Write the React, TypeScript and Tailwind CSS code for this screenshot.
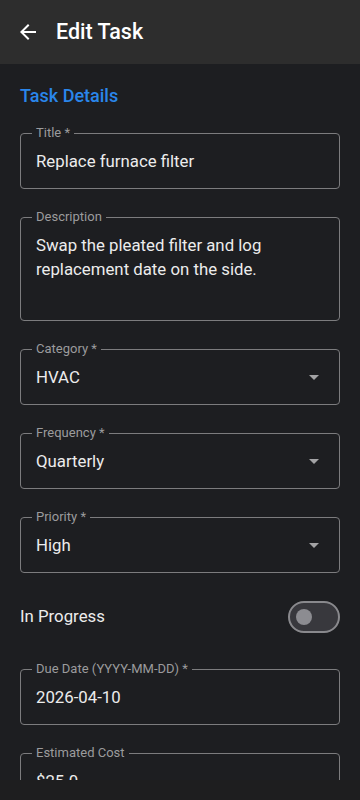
import React from "react";

const font = { fontFamily: "Roboto, 'Noto Sans', sans-serif" };

function Field({
  label,
  value,
  select,
  multiline,
}: {
  label: string;
  value: string;
  select?: boolean;
  multiline?: boolean;
}) {
  return (
    <div
      className={`relative rounded-[4px] border border-[#7c7c7e] ${
        multiline ? "h-[104px] pt-[15px]" : "h-14 flex items-center"
      } pl-[15px] pr-4`}
    >
      <span className="absolute -top-[9px] left-[11px] bg-[#1d1e21] px-1 text-[13px] leading-4 text-[#9b9b9d]">
        {label}
      </span>
      <div className="flex-1 text-[16.8px] leading-6 text-[#ececec]">{value}</div>
      {select && (
        <svg width="10" height="5" viewBox="0 0 10 5" className="mr-[4px]">
          <path d="M0 0h10L5 5z" fill="#a3a3a5" />
        </svg>
      )}
    </div>
  );
}

export default function App() {
  return (
    <div className="flex h-[800px] w-[360px] flex-col bg-[#1e1e1f]" style={font}>
      <header className="flex h-16 shrink-0 items-center bg-[#2d2d2d] pl-4">
        <svg width="24" height="24" viewBox="0 0 24 24">
          <path
            d="M20 11H7.83l5.59-5.59L12 4l-8 8 8 8 1.41-1.41L7.83 13H20v-2z"
            fill="#ffffff"
          />
        </svg>
        <h1 className="ml-4 text-[21.5px] font-medium text-white">Edit Task</h1>
      </header>
      <main className="h-[716px] shrink-0 overflow-hidden bg-[#1d1e21] px-5 pt-5">
        <h2 className="text-[18px] font-medium leading-6 text-[#2a86eb]">Task Details</h2>
        <div className="mt-[25px] flex flex-col gap-7">
          <Field label="Title *" value="Replace furnace filter" />
          <Field
            label="Description"
            value="Swap the pleated filter and log replacement date on the side."
            multiline
          />
          <Field label="Category *" value="HVAC" select />
          <Field label="Frequency *" value="Quarterly" select />
          <Field label="Priority *" value="High" select />
          <div className="mb-2 flex h-8 items-center justify-between">
            <span className="text-[16.8px] text-[#ececec]">In Progress</span>
            <div className="flex h-8 w-[52px] items-center rounded-full border-2 border-[#89898d] bg-[#38383d] pl-[6px]">
              <div className="h-4 w-4 rounded-full bg-[#8c8c91]" />
            </div>
          </div>
          <Field label="Due Date (YYYY-MM-DD) *" value="2026-04-10" />
          <Field label="Estimated Cost" value="$25.0" />
        </div>
      </main>
    </div>
  );
}
